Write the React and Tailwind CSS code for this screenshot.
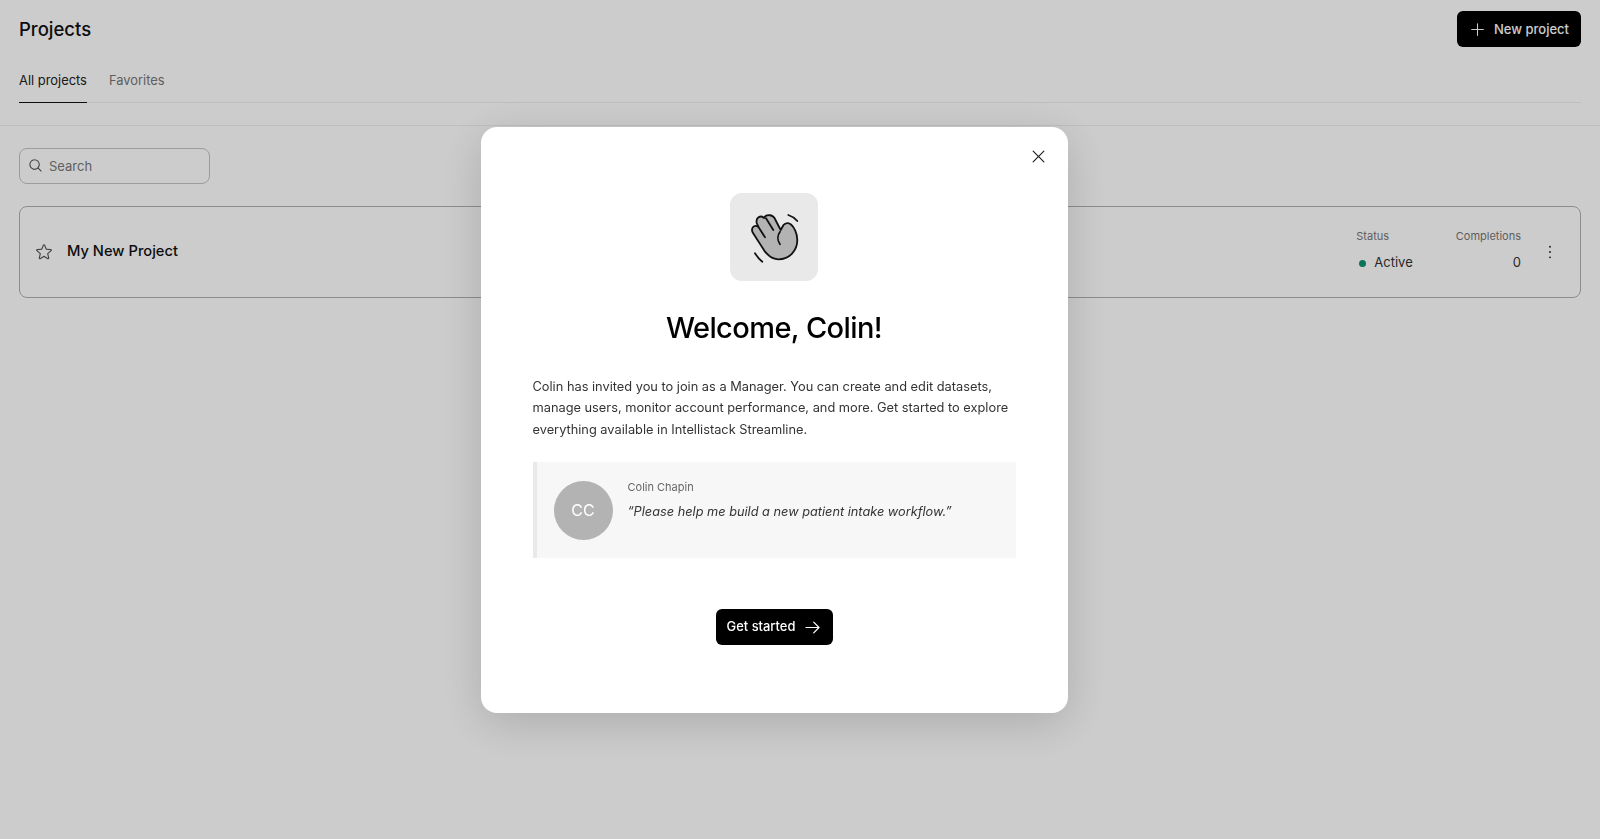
import { PiArrowRight, PiDotsThreeVertical, PiMagnifyingGlass, PiPlus, PiStar, PiX } from "react-icons/pi";

const WaveIcon = () => {
  return (
    <svg viewBox="0 0 88 88" className="h-[88px] w-[88px]" fill="none" stroke="#111" strokeWidth="1.8" strokeLinecap="round" strokeLinejoin="round">
      <path
        fill="#b3b3b3"
        d="M23 40 L35 58.7 C39 63.5 43.5 66.3 48.5 66.3 C59 66.3 67.3 58 67.3 47 C67.3 40 64 34 61 31.5 C59 29.5 55.5 29.5 53.5 32 L50.7 37 L45.5 27 C43.5 21.5 36.5 20.5 34 25 C31 22 25.5 24 26.7 30 L28.3 33.7 C23.5 31 20.5 36 23 40 Z"
      />
      <path d="M28.3 33.7 L35 44.3" />
      <path d="M36 25.3 L43.3 37" />
      <path d="M50 38.7 C47.5 42 47 47 50 51.3" />
      <path d="M58.3 22 C62 23.2 65 25.2 67.3 28" />
      <path d="M25 60.3 C27 63.5 29.5 66.5 32.3 68.7" />
    </svg>
  );
};

const ProjectCard = () => {
  return (
    <div className="flex h-[92px] items-center rounded-lg border border-[#b0b0b0] pl-[15px] pr-[20px]">
      <PiStar className="h-[18px] w-[18px] text-[#555]" />
      <span className="ml-[14px] -mt-[2px] flex-1 text-[14.7px] font-medium text-[#111]">My New Project</span>
      <div className="flex flex-col items-start gap-[9px] pb-[4px]">
        <span className="text-[11px] text-[#777]">Status</span>
        <div className="flex items-center pl-[3px] text-[13px] text-[#333]">
          <span className="h-[7px] w-[7px] rounded-full bg-[#12916f]"></span>
          <span className="ml-[8px]">Active</span>
        </div>
      </div>
      <div className="ml-[43px] flex flex-col items-end gap-[9px] pb-[4px]">
        <span className="text-[11px] text-[#777]">Completions</span>
        <span className="text-[13px] text-[#333]">0</span>
      </div>
      <PiDotsThreeVertical className="ml-[19px] h-[20px] w-[20px] text-[#222]" />
    </div>
  );
};

const WelcomeModal = () => {
  return (
    <div className="fixed inset-0 flex items-center justify-center bg-black/20">
      <div className="relative mr-[52px] flex h-[586px] w-[587px] flex-col items-center rounded-2xl bg-white px-[52px] pt-[66px] shadow-[0_10px_45px_rgba(0,0,0,0.16)]">
        <button className="absolute right-[20px] top-[20px] text-[#222]">
          <PiX className="h-[19px] w-[19px]" />
        </button>

        <div className="h-[88px] w-[88px] rounded-xl bg-[#e9e9e9]">
          <WaveIcon />
        </div>

        <h1 className="mt-[26px] text-[29px] font-medium leading-[42px] tracking-[-0.02em] text-black">Welcome, Colin!</h1>

        <p className="mt-[27px] w-full text-[12.8px] leading-[21.5px] text-[#333]">
          Colin has invited you to join as a Manager. You can create and edit datasets, manage users, monitor account performance, and more. Get started to explore everything available in Intellistack Streamline.
        </p>

        <div className="mt-[22px] flex h-[96px] w-full items-center border-l-4 border-[#e9e9e9] bg-[#f7f7f7] pl-[17px]">
          <div className="flex h-[59px] w-[59px] items-center justify-center rounded-full bg-[#b3b3b3] pb-px text-base text-white">CC</div>
          <div className="ml-[15px] flex flex-col gap-[7px] pb-[20px]">
            <span className="text-[11px] text-[#666]">Colin Chapin</span>
            <span className="text-[12.75px] italic text-[#333]">“Please help me build a new patient intake workflow.”</span>
          </div>
        </div>

        <button className="mt-[51px] flex h-[36px] w-[117px] items-center justify-center gap-[8px] rounded-md bg-black pl-px text-[12.9px] font-medium text-white">
          Get started
          <PiArrowRight className="h-[19px] w-[19px]" />
        </button>
      </div>
    </div>
  );
};

const App = () => {
  return (
    <div className="min-h-[839px] bg-white font-['Inter',sans-serif]">
      <header className="border-b border-[#eeeeee] px-[19px] pb-[22px] pt-[11px]">
        <div className="flex h-[36px] items-center justify-between">
          <h1 className="pt-px text-[18.5px] font-medium text-[#111]">Projects</h1>
          <button className="flex h-[36px] w-[124px] items-center justify-center gap-[8px] rounded-md bg-black pt-px text-[13px] font-medium text-white">
            <PiPlus className="h-[17px] w-[17px]" />
            New project
          </button>
        </div>
        <nav className="mt-[24px] flex gap-[22px] border-b border-[#eeeeee] text-[12.9px]">
          <span className="-mb-px border-b border-[#111] pb-[12px] text-[#222]">All projects</span>
          <span className="pb-[12px] text-[#777]">Favorites</span>
        </nav>
      </header>

      <main className="px-[19px] pt-[22px]">
        <div className="flex h-[36px] w-[191px] items-center gap-[6px] rounded-lg border border-[#c4c4c4] pl-[8px] text-[13px] text-[#777]">
          <PiMagnifyingGlass className="-mt-px h-[15px] w-[15px] text-[#444]" />
          Search
        </div>
        <div className="mt-[22px]">
          <ProjectCard />
        </div>
      </main>

      <WelcomeModal />
    </div>
  );
};

export default App;
